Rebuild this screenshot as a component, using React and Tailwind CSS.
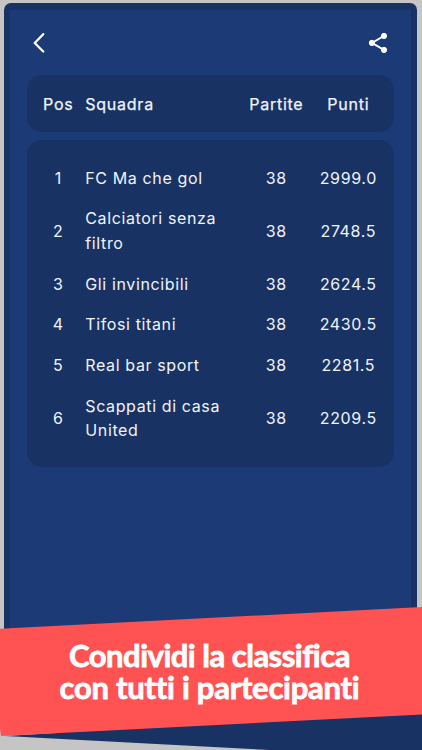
import React from 'react'

const teams = [
  { pos: 1, name: 'FC Ma che gol', played: 38, points: '2999.0' },
  { pos: 2, name: 'Calciatori senza filtro', played: 38, points: '2748.5' },
  { pos: 3, name: 'Gli invincibili', played: 38, points: '2624.5' },
  { pos: 4, name: 'Tifosi titani', played: 38, points: '2430.5' },
  { pos: 5, name: 'Real bar sport', played: 38, points: '2281.5' },
  { pos: 6, name: 'Scappati di casa United', played: 38, points: '2209.5' },
]

const columns = 'grid grid-cols-[42px_155px_60px_72px] gap-x-1.5 items-center pl-[10.3px] text-center'

const TopBar = () => {
  return (
    <header className="flex h-[65px] items-center justify-between pl-[21px] pr-[23px]">
      <svg className="h-5 w-4" viewBox="0 0 16 20" fill="none" stroke="white" strokeWidth="2.3" strokeLinecap="round" strokeLinejoin="round">
        <path d="M12.2 1.2 3.7 10l8.5 8.5" />
      </svg>
      <svg className="h-[22px] w-5" viewBox="0 0 20 22" fill="white" stroke="white">
        <path d="M16 3.9 3.9 10.9l12.1 7" fill="none" strokeWidth="1.8" />
        <circle cx="16" cy="3.9" r="2.6" />
        <circle cx="3.9" cy="10.9" r="2.6" />
        <circle cx="16" cy="17.9" r="2.6" />
      </svg>
    </header>
  )
}

const Standings = () => {
  return (
    <main className="mx-[17px] flex flex-col gap-2 text-base tracking-[0.62px] text-[#f0f4fb]">
      <div className={`${columns} h-[57px] rounded-[15px] bg-[#183263] tracking-[0.75px] [-webkit-text-stroke:0.25px_#f0f4fb]`}>
        <span>Pos</span>
        <span className="text-left">Squadra</span>
        <span>Partite</span>
        <span>Punti</span>
      </div>

      <div className="rounded-[15px] bg-[#183263] pt-[17.4px] pb-4">
        {teams.map((team) => (
          <div key={team.pos} className={`${columns} py-[8.2px] leading-[24.4px]`}>
            <span>{team.pos}</span>
            <span className="text-left">{team.name}</span>
            <span>{team.played}</span>
            <span>{team.points}</span>
          </div>
        ))}
      </div>
    </main>
  )
}

const App = () => {
  return (
    <div className="relative h-[750px] w-[422px] overflow-hidden bg-[#c5c5c5] font-['Inter',sans-serif]">
      {/* Phone frame */}
      <div className="ml-1 h-[750px] w-[413px] pt-[3px]">
        <div className="h-[730px] rounded-t-[7px] bg-[#183263] px-1.5 pt-[7px]">
          <div className="h-full bg-[#1c3b76]">
            <TopBar />
            <Standings />
          </div>
        </div>
      </div>

      {/* Slanted ribbon over the bottom of the frame */}
      <div className="absolute inset-x-0 bottom-0 h-[150px]">
        <svg className="absolute inset-0" width="422" height="150" viewBox="0 0 422 150">
          <path d="M5 136 422 112v46Z" fill="#183263" />
          <path d="M0 28.7 422 7v107.5L1 136 0 129Z" fill="#ff5353" />
        </svg>
        <h1 className="relative flex flex-col items-center pt-[39px] pr-[3px] font-['Lato',sans-serif] text-[31px] leading-8 font-bold whitespace-nowrap text-white [-webkit-text-stroke:0.8px_white]">
          <span className="tracking-[-0.5px]">Condividi la classifica</span>
          <span className="tracking-[-0.26px]">con tutti i partecipanti</span>
        </h1>
      </div>
    </div>
  )
}

export default App
